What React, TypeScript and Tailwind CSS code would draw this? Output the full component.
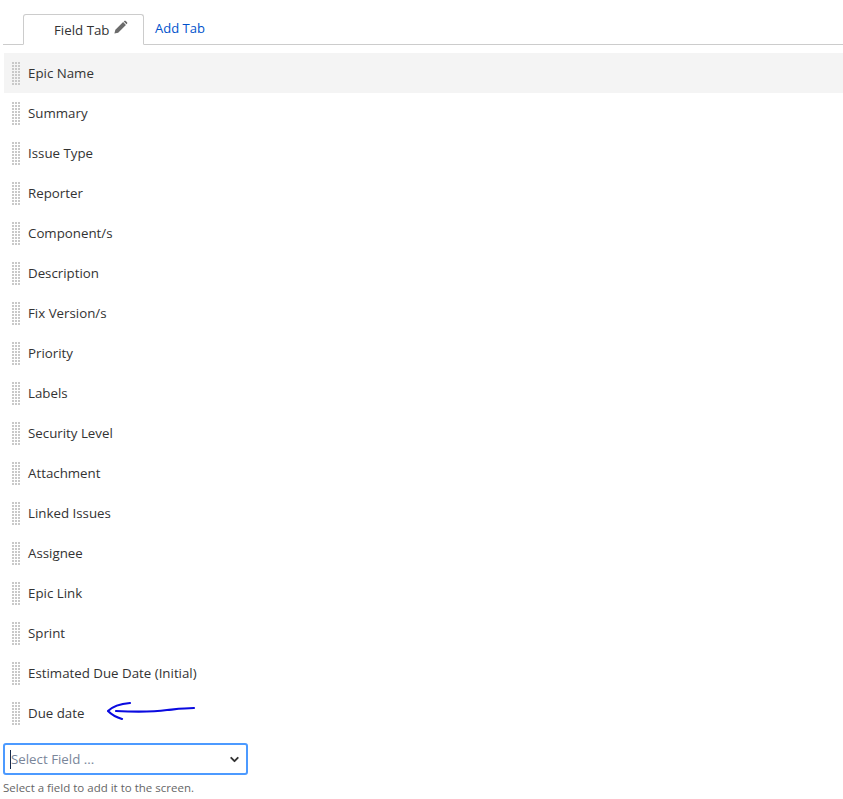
import { ChevronDown } from "lucide-react";

const FIELDS = [
  "Epic Name",
  "Summary",
  "Issue Type",
  "Reporter",
  "Component/s",
  "Description",
  "Fix Version/s",
  "Priority",
  "Labels",
  "Security Level",
  "Attachment",
  "Linked Issues",
  "Assignee",
  "Epic Link",
  "Sprint",
  "Estimated Due Date (Initial)",
  "Due date",
];

function Grip() {
  const dots = [];
  for (let y = 0; y < 8; y++) {
    for (let x = 0; x < 3; x++) {
      dots.push(<rect key={`${x}-${y}`} x={x * 3} y={y * 3} width="2" height="2" fill="#c9c9c9" />);
    }
  }
  return (
    <svg width="8" height="23" viewBox="0 0 8 23" className="shrink-0">
      {dots}
    </svg>
  );
}

export default function App() {
  return (
    <div className="h-[799px] w-[843px] overflow-hidden bg-white pl-[3px] font-['Open_Sans',sans-serif] text-[13.3px] text-[#333333]">
      <div className="flex h-[45px] items-end border-b border-[#cccccc] pl-5">
        <div className="mb-[-1px] flex h-[31px] w-[121px] items-center gap-[4px] rounded-t-[3px] border border-b-white border-[#cccccc] bg-white pl-[30px]">
          <span className="pt-0.5">Field Tab</span>
          <svg width="15" height="15" viewBox="0 0 16 16" className="mb-1">
            <path d="M1.5 14.5 L2.5 10.5 L10.8 2.2 L13.8 5.2 L5.5 13.5 Z M11.8 1.2 C12.4 .6 13.2 .6 13.8 1.2 L14.8 2.2 C15.4 2.8 15.4 3.6 14.8 4.2 L14.4 4.6 L11.4 1.6 Z" fill="#6b6b6b" />
          </svg>
        </div>
        <span className="mb-[6px] ml-[11px] text-[13px] text-[#0052cc]">Add Tab</span>
      </div>

      <ul className="mt-2 pl-px">
        {FIELDS.map((name, i) => (
          <li
            key={name}
            className={`flex h-10 items-center gap-[8px] pl-2 ${i === 0 ? "bg-[#f4f4f4]" : ""}`}
          >
            <Grip />
            <span className="pt-0.5">{name}</span>
            {name === "Due date" && (
              <svg width="92" height="22" viewBox="0 0 92 22" className="ml-[15px] mt-[-3px] shrink-0">
                <path
                  d="M1 10 C5 6 12 3 23 2 M1 10 C4 13 8 16 15 18 M9 10 C28 11 46 11 60 9 C70 8 78 7 87 7"
                  fill="none"
                  stroke="#0a0ae0"
                  strokeWidth="2.2"
                  strokeLinecap="round"
                />
              </svg>
            )}
          </li>
        ))}
      </ul>

      <div className="mt-[10px] flex h-8 w-[245px] items-center justify-between rounded-[3px] border-2 border-[#4c9aff] pl-[5px] pr-[5px]">
        <span className="border-l border-[#172b4d] pb-px leading-[18px] text-[#7a869a]">Select Field ...</span>
        <ChevronDown size={13} strokeWidth={3.5} className="text-[#333333]" />
      </div>
      <p className="mt-[5px] text-[11.5px] leading-4 text-[#666666]">Select a field to add it to the screen.</p>
    </div>
  );
}
